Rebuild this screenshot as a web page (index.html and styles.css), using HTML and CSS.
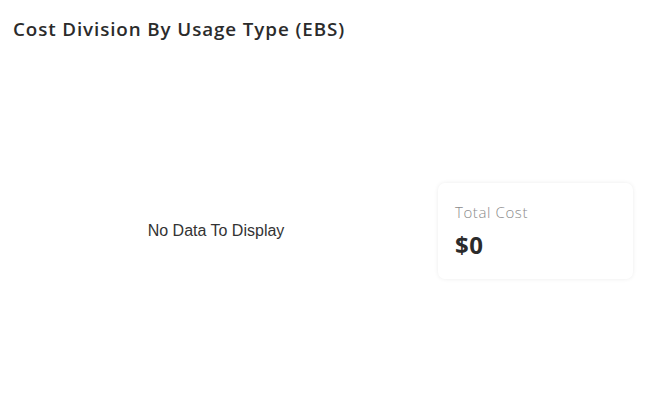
FILE: index.html
```html
<!DOCTYPE html>
<html>
<head>
<meta charset="utf-8">
<link rel="stylesheet" href="styles.css">
</head>
<body>
<div class="widget">
  <h2 class="title">Cost Division By Usage Type (EBS)</h2>
  <div class="content">
    <div class="chart">
      <span class="nodata">No Data To Display</span>
    </div>
    <div class="card">
      <div class="label">Total Cost</div>
      <div class="value">$0</div>
    </div>
  </div>
</div>
</body>
</html>
```
FILE: styles.css
```css
html, body {
  margin: 0;
  padding: 0;
  background: #ffffff;
}
.widget {
  width: 649px;
  height: 420px;
  box-sizing: border-box;
  padding: 17px 16px 0 13px;
  display: flex;
  flex-direction: column;
  font-family: "Open Sans", "Liberation Sans", sans-serif;
}
.title {
  margin: 0;
  font-size: 18.8px;
  font-weight: 600;
  color: #2b2b2b;
  line-height: 24px;
  letter-spacing: 0.9px;
}
.content {
  display: flex;
  align-items: center;
  height: 384px;
}
.chart {
  width: 406px;
  display: flex;
  justify-content: center;
  align-items: center;
}
.nodata {
  font-family: "Liberation Sans", Arial, sans-serif;
  font-size: 16px;
  color: #333333;
}
.card {
  width: 195px;
  height: 96px;
  box-sizing: border-box;
  margin-left: 19px;
  padding: 19px 17px;
  border-radius: 7px;
  background: #ffffff;
  box-shadow: 0 0 4px rgba(0, 0, 0, 0.08);
}
.label {
  font-size: 15px;
  font-weight: 300;
  color: #8a8a8a;
  line-height: 20px;
  letter-spacing: 0.6px;
}
.value {
  margin-top: 10px;
  font-size: 24px;
  font-weight: 700;
  color: #2b2b2b;
  line-height: 26px;
  letter-spacing: 0.5px;
}
```
